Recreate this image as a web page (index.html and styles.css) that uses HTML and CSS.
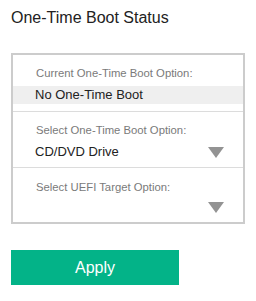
FILE: index.html
```html
<!DOCTYPE html>
<html>
<head>
<meta charset="utf-8">
<link rel="stylesheet" href="styles.css">
</head>
<body>
<div class="page">
  <h1 class="title">One-Time Boot Status</h1>
  <div class="panel">
    <div class="section s1">
      <div class="label">Current One-Time Boot Option:</div>
      <div class="current">No One-Time Boot</div>
    </div>
    <div class="section s2">
      <div class="label">Select One-Time Boot Option:</div>
      <div class="select">
        <span class="value">CD/DVD Drive</span>
        <span class="arrow"></span>
      </div>
    </div>
    <div class="section s3">
      <div class="label">Select UEFI Target Option:</div>
      <div class="select">
        <span class="value"></span>
        <span class="arrow"></span>
      </div>
    </div>
  </div>
  <button class="apply">Apply</button>
</div>
</body>
</html>
```
FILE: styles.css
```css
* { box-sizing: border-box; }
html, body { margin: 0; padding: 0; background: #fff; }
body { font-family: "Liberation Sans", Arial, sans-serif; color: #222; }
.page { padding: 9px 11px 0 11px; }
.title {
  margin: 0;
  font-size: 16px;
  line-height: 18px;
  font-weight: normal;
  color: #222;
}
.panel {
  margin-top: 26px;
  width: 234px;
  border: 2px solid #cccccc;
}
.section { border-top: 1px solid #dcdcdc; }
.section:first-child { border-top: none; }
.s1 { height: 56px; padding-top: 12px; }
.s2 { height: 56px; padding-top: 12px; }
.s3 { height: 55px; padding-top: 13px; }
.label {
  font-size: 11.3px;
  line-height: 13px;
  color: #7a7a7a;
  padding-left: 23px;
}
.current {
  margin-top: 6px;
  height: 18px;
  line-height: 18px;
  font-size: 13px;
  background: #efefef;
  padding-left: 22px;
  color: #222;
}
.select {
  margin-top: 8px;
  height: 14px;
  display: flex;
  align-items: center;
  justify-content: space-between;
  padding-left: 22px;
  padding-right: 19px;
}
.s3 .select { margin-top: 6px; }
.value { font-size: 13px; line-height: 14px; color: #222; }
.arrow {
  width: 0;
  height: 0;
  border-left: 8px solid transparent;
  border-right: 8px solid transparent;
  border-top: 11px solid #939393;
  margin-top: 1px;
}
.apply {
  display: block;
  margin-top: 26px;
  width: 168px;
  height: 35px;
  border: none;
  background: #03b388;
  color: #fff;
  font-family: "Liberation Sans", Arial, sans-serif;
  font-size: 16px;
  padding: 0;
}
```
